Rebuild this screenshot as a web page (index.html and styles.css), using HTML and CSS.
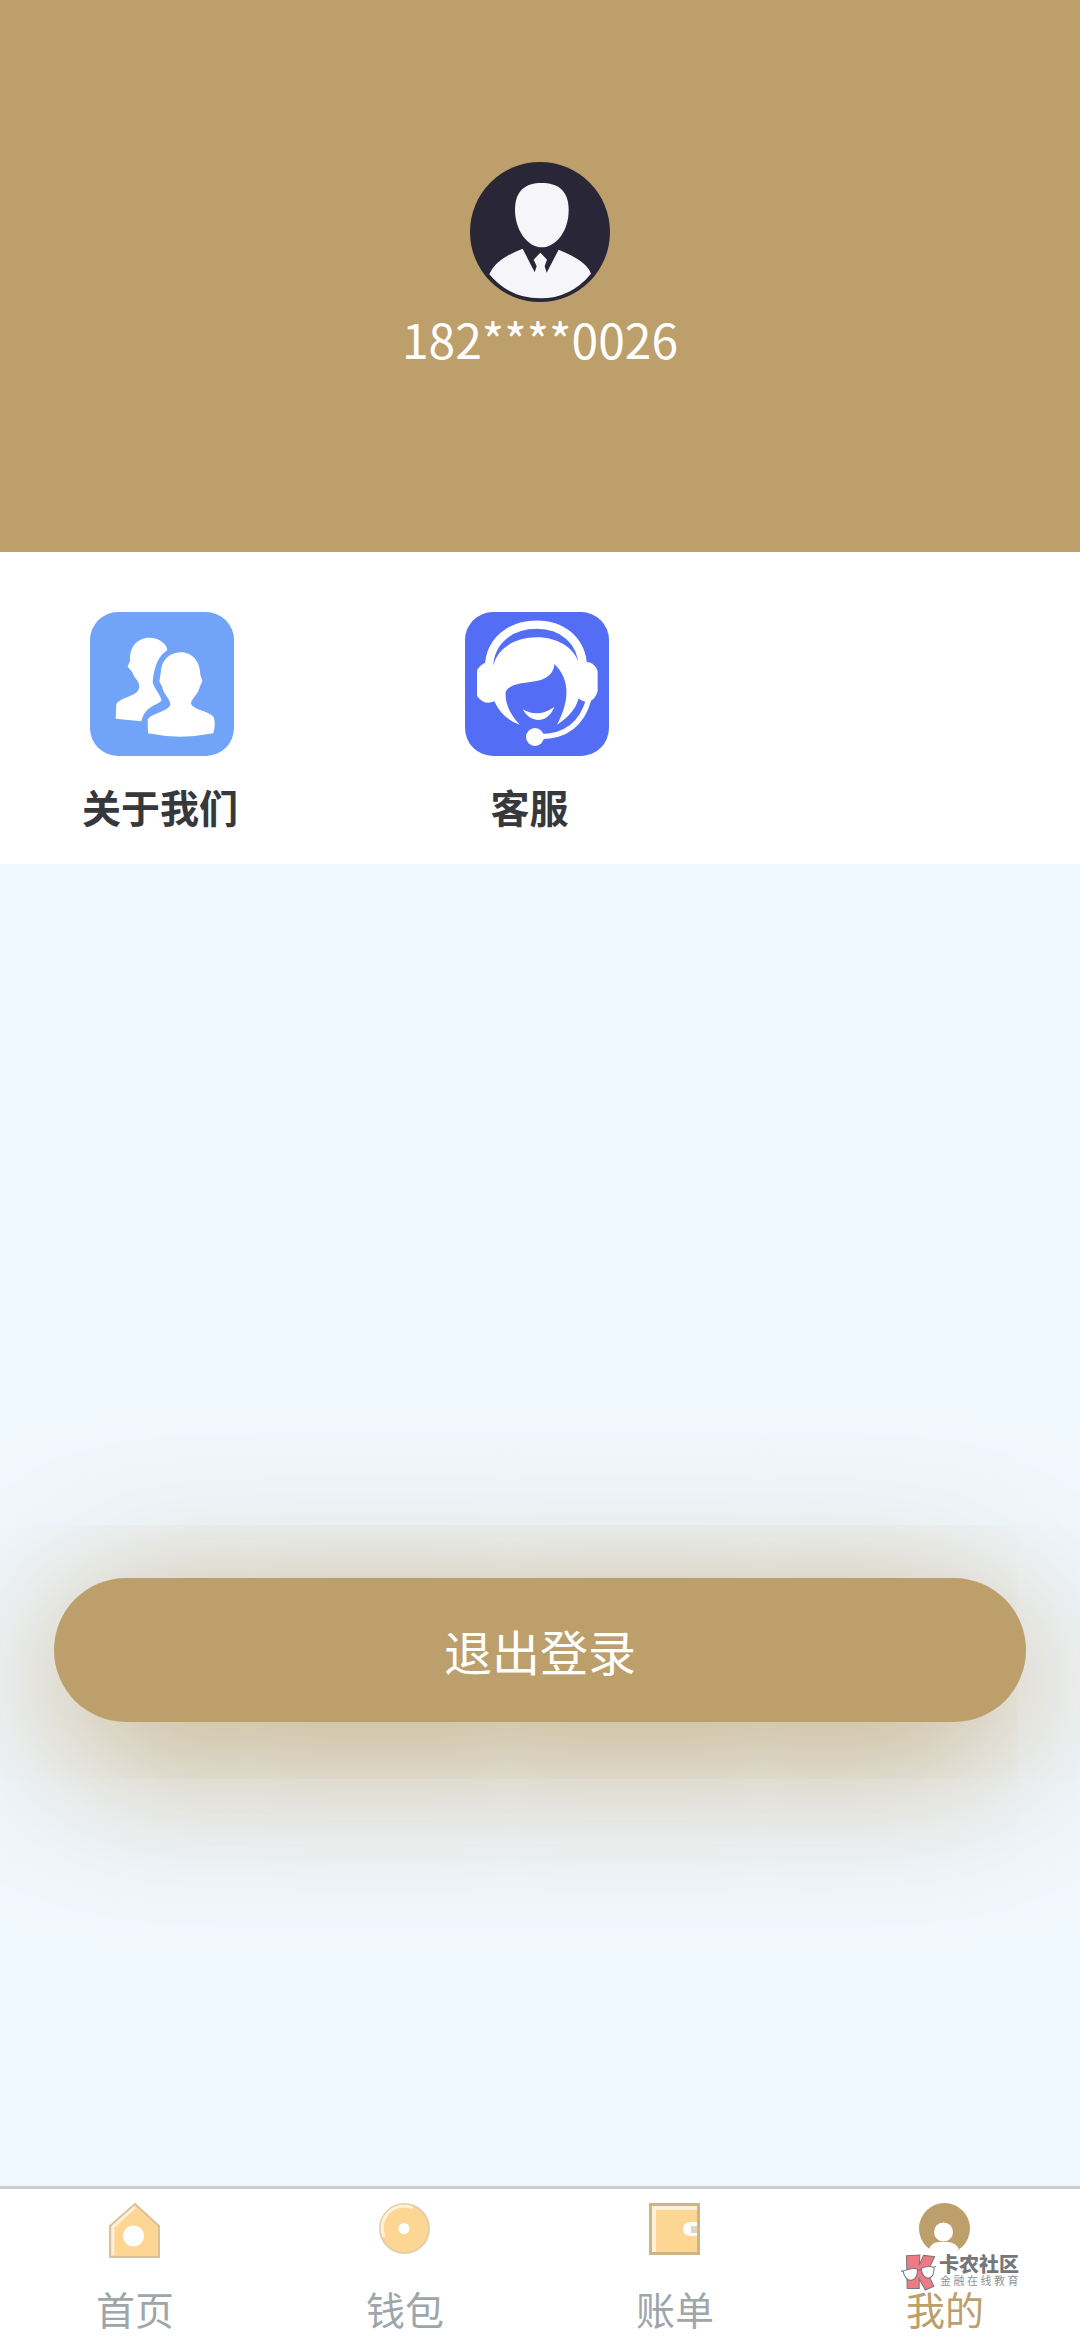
FILE: index.html
```html
<!DOCTYPE html>
<html lang="zh-CN">
<head>
<meta charset="utf-8">
<title>我的</title>
<link rel="stylesheet" href="styles.css">
</head>
<body>
<div class="page">
  <header class="profile">
    <svg class="avatar" viewBox="0 0 420 420">
      <circle cx="210" cy="210" r="210" fill="#292638"/>
      <path fill="#f6f6fa" d="M215 63C262 63 296 84 296 144C296 210 256 256 215 256C174 256 135 206 135 144C135 86 166 63 215 63Z"/>
      <path fill="#f6f6fa" d="M158 260L194 331L200 313L191 293L211 272L231 293L224 313L230 332L266 263Q350 297 363 335Q302 409 210 409Q118 409 58 337Q76 291 158 260Z"/>
    </svg>
    <div class="phone">182****0026</div>
  </header>

  <section class="menu">
    <a class="entry entry-about">
      <svg class="entry-icon" viewBox="0 0 432 432">
        <rect width="432" height="432" rx="84" fill="#71a3f8"/>
        <path fill="#fff" d="M178 77C207 77 231 96 232 114C206 132 194 158 188 208C189 225 208 244 215 264C207 280 166 278 154 328L77 320L79 276C86 259 132 253 144 236C151 223 149 213 134 196L126 179L113 164L120 146C118 106 141 77 178 77Z"/>
        <path fill="#fff" d="M272 121C306 121 330 147 331 188L337 207L329 226C326 245 302 263 303 276C312 294 356 297 371 315Q378 338 370 364Q270 384 174 364L173 322C188 301 232 300 241 278C241 262 218 242 217 226L208 208L212 184C213 146 238 121 272 121Z"/>
      </svg>
      <span class="entry-label">关于我们</span>
    </a>
    <a class="entry entry-service">
      <svg class="entry-icon" viewBox="0 0 432 432">
        <rect width="432" height="432" rx="84" fill="#536ef5"/>
        <path fill="none" stroke="#fff" stroke-width="25" d="M72 166C74 84 139 38 215 38S351 84 354 166"/>
        <path fill="#fff" d="M86 158C99 107 152 76 215 76S330 107 343 158L371 150Q396 160 398 180V238Q390 264 373 268Q355 273 341 259Q329 305 276 338C306 282 324 210 268 156Q267 190 225 205C178 216 136 211 122 240Q118 288 164 338Q111 320 88 268Q58 282 36 252V174Q48 157 59 153Z"/>
        <path fill="#fff" d="M173 292Q219 319 268 285Q252 324 217 324Q190 322 173 292Z"/>
        <path fill="none" stroke="#fff" stroke-width="16" d="M372 260C352 334 306 374 225 374"/>
        <circle cx="210" cy="375" r="27" fill="#fff"/>
      </svg>
      <span class="entry-label">客服</span>
    </a>
  </section>

  <main class="content">
    <button class="logout">退出登录</button>
  </main>

  <nav class="tabbar">
    <a class="tab">
      <svg class="tab-icon" viewBox="0 0 52 58">
        <path fill="#fed693" stroke="#d9c29a" stroke-width="2" d="M1 23L26 1L50 23V54H1Z"/>
        <path fill="none" stroke="#fff0da" stroke-width="3" d="M4 52V24L26 4"/>
        <circle cx="24.500" cy="33" r="10.500" fill="#fff"/>
      </svg>
      <span class="tab-label">首页</span>
    </a>
    <a class="tab">
      <svg class="tab-icon" viewBox="0 0 52 58">
        <circle cx="25.500" cy="25.500" r="24.500" fill="#fed693" stroke="#e2cfaa" stroke-width="2"/>
        <path fill="none" stroke="#fff0da" stroke-width="3" d="M5 34A22 22 0 0 1 34 5"/>
        <circle cx="25" cy="25.500" r="5.500" fill="#fff"/>
      </svg>
      <span class="tab-label">钱包</span>
    </a>
    <a class="tab">
      <svg class="tab-icon" viewBox="0 0 52 58">
        <path fill="#fed693" stroke="#cdb587" stroke-width="3" d="M1.500 1.500H49.500V50.500H1.500Z"/>
        <path fill="none" stroke="#fff0da" stroke-width="4" d="M5 49V5H48"/>
        <path fill="#fff" d="M48 19H41Q34 20 34 26T41 33H48Z"/>
        <rect x="42" y="23" width="6" height="7" fill="#dfd5c2"/>
      </svg>
      <span class="tab-label">账单</span>
    </a>
    <a class="tab tab-active">
      <svg class="tab-icon" viewBox="0 0 52 58">
        <circle cx="25.500" cy="25.500" r="25.500" fill="#bc9f6a"/>
        <circle cx="24.500" cy="29" r="9.500" fill="#fff"/>
        <path fill="#fff" d="M10 46Q13 39 20 39H29Q37 40 40 46Q32 53 25 53T10 46Z"/>
      </svg>
      <span class="tab-label">我的</span>
    </a>
  </nav>

  <div class="stamp">
    <svg class="stamp-logo" viewBox="0 0 102 108">
      <path fill="#ee7b84" stroke="#77777a" stroke-width="3" d="M16 5L55 3L53 32L66 4L98 8L76 54L96 94L71 105L53 73L53 101L18 101Z"/>
      <path fill="#fff" stroke="#77777a" stroke-width="3" d="M6 50Q30 39 48 44Q49 75 29 77Q11 76 6 50ZM59 42Q77 33 96 39Q98 68 79 71Q61 67 59 42ZM48 48L59 45M0 50L7 50M94 39L102 36"/>
    </svg>
    <div class="stamp-text">
      <span class="stamp-name">卡农社区</span>
      <span class="stamp-sub">金融在线教育</span>
    </div>
  </div>
</div>
</body>
</html>
```

FILE: styles.css
```css
* { box-sizing: border-box; }

body {
  margin: 0;
  font-family: "Noto Sans CJK SC", sans-serif;
}

.page {
  position: relative;
  display: flex;
  flex-direction: column;
  width: 1080px;
  height: 2340px;
  overflow: hidden;
  background: #f0f8ff;
}

.profile {
  display: flex;
  flex-direction: column;
  align-items: center;
  height: 552px;
  padding-top: 162px;
  background: #bc9f6a;
}

.avatar { width: 140px; height: 140px; }

.phone {
  font-size: 48px;
  line-height: 72px;
  color: #fff;
}

.menu {
  display: flex;
  gap: 231px;
  height: 312px;
  padding: 60px 90px 0;
  background: #fff;
}

.entry {
  display: flex;
  flex-direction: column;
  align-items: center;
  width: 144px;
}

.entry-icon { width: 144px; height: 144px; }

.entry-label {
  margin-top: 21px;
  font-size: 39px;
  line-height: 58px;
  font-weight: 700;
  white-space: nowrap;
  color: #36383b;
}

.entry-about .entry-label { margin-right: 4px; }
.entry-service .entry-label { margin-right: 15px; }

.content {
  flex: 1;
  padding: 714px 54px 0;
}

.logout {
  display: block;
  width: 100%;
  height: 144px;
  padding: 0;
  border: 0;
  border-radius: 72px;
  background: #bc9f6a;
  box-shadow: 0 30px 168px #bc9f6a;
  font-family: inherit;
  font-size: 48px;
  color: #fff;
}

.tabbar {
  display: flex;
  height: 154px;
  border-top: 3px solid #c9cdd0;
  background: #fff;
}

.tab {
  display: flex;
  flex: 1;
  flex-direction: column;
  align-items: center;
  padding-top: 14px;
  color: #9fa6aa;
}

.tab-active { color: #bc9f6a; }

.tab-icon { width: 52px; height: 58px; }

.tab-label {
  margin-top: 27px;
  font-size: 39px;
  line-height: 40px;
}

.stamp {
  position: absolute;
  left: 901px;
  top: 2254px;
  display: flex;
  gap: 3px;
}

.stamp-logo { width: 35px; height: 37px; }

.stamp-text {
  display: flex;
  flex-direction: column;
  white-space: nowrap;
}

.stamp-name {
  font-size: 20px;
  line-height: 20px;
  font-weight: 900;
  color: #77777a;
}

.stamp-sub {
  padding: 0 0 0 1px;
  font-size: 11px;
  line-height: 12px;
  letter-spacing: 2.500px;
  color: #929295;
}
```
